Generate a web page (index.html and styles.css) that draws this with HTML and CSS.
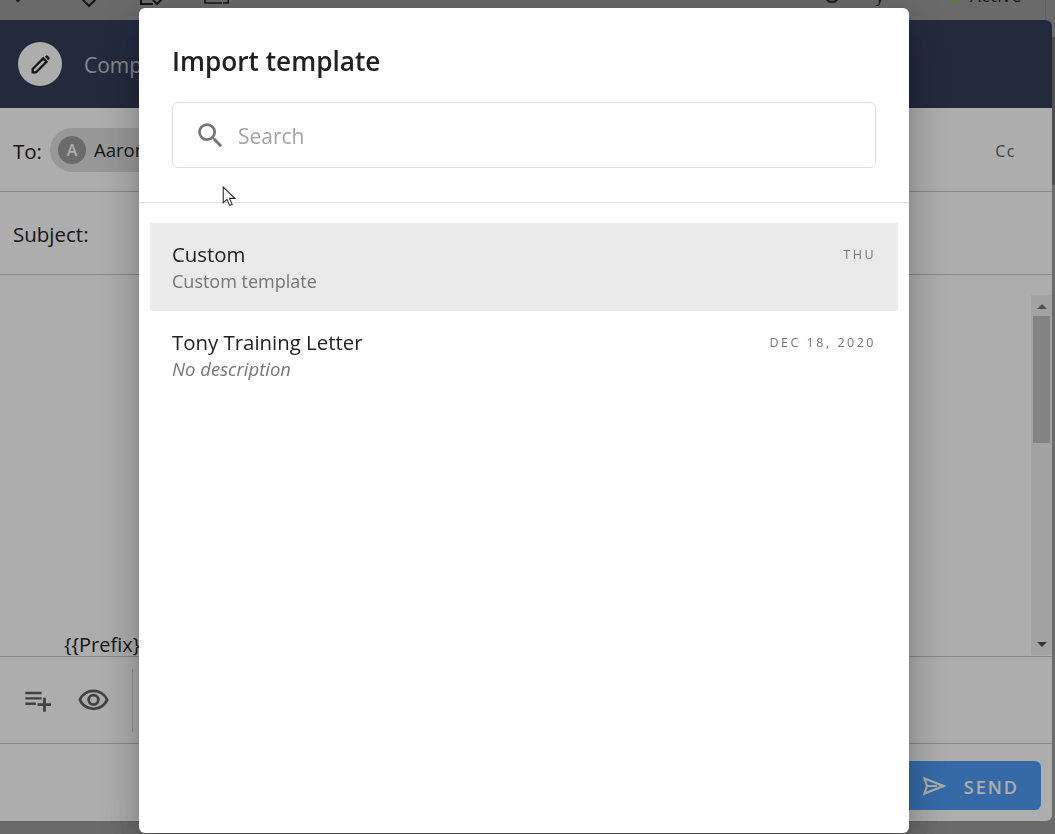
FILE: index.html
```html
<!DOCTYPE html>
<html lang="en">
<head>
<meta charset="utf-8">
<title>Import template</title>
<link rel="stylesheet" href="styles.css">
</head>
<body>
<div class="page">
  <div class="topbar">
    <div class="topbar-left">
      <svg class="top-icon top-first" viewBox="0 0 24 24"><path d="M9 13l3 3 3-3"/></svg>
      <svg class="top-icon" viewBox="0 0 24 24"><path d="M3 12l9 9 9-9"/></svg>
      <svg class="top-icon" viewBox="0 0 24 24"><path d="M0 3v16h12M12 15l4 4 7-7"/></svg>
      <svg class="top-icon" viewBox="0 0 28 24"><path d="M0 3v16h20M21 19h6V3"/></svg>
    </div>
    <div class="topbar-right">
      <span class="clock"></span><span class="top-text top-y">y</span>
      <span class="status-dot"></span><span class="top-text top-active">Active</span>
      <span class="top-rule"></span>
    </div>
  </div>
  <div class="compose">
    <header class="compose-head">
      <span class="head-avatar">
        <svg viewBox="0 0 24 24"><path class="pencil-body" d="M4.5 19.5v-3.2L14.6 6.2l3.2 3.2L7.7 19.5z"/><path d="M16.2 4.6l1.2-1.2a1 1 0 0 1 1.4 0l1.8 1.8a1 1 0 0 1 0 1.4l-1.2 1.2z"/></svg>
      </span>
      <span class="head-title">Compose</span>
    </header>
    <div class="field field-to">
      <span class="field-label">To:</span>
      <span class="chip"><span class="chip-avatar">A</span><span class="chip-name">Aaron Smith</span></span>
      <span class="cc">Cc</span>
    </div>
    <div class="field field-subject">
      <span class="field-label">Subject:</span>
    </div>
    <div class="editor">
      <div class="editor-text">{{Prefix}}</div>
      <div class="scrollbar">
        <span class="arrow-up"></span>
        <span class="thumb"></span>
        <span class="arrow-down"></span>
      </div>
    </div>
    <div class="tools">
      <svg class="tool tool-list" viewBox="0 0 24 24"><path d="M2 5h14v2H2zM2 9.6h14v2H2zM2 14.2h9v2H2zM17.2 10h2.4v4.8h4.4v2.4h-4.4V22h-2.4v-4.8h-4.7v-2.4h4.7z"/></svg>
      <svg class="tool tool-eye" viewBox="0 0 24 24"><path d="M12 6a9.77 9.77 0 0 1 8.82 5.5A9.77 9.77 0 0 1 12 17a9.77 9.77 0 0 1-8.82-5.5A9.77 9.77 0 0 1 12 6m0-2C7 4 2.73 7.11 1 11.5 2.73 15.89 7 19 12 19s9.27-3.11 11-7.5C21.27 7.11 17 4 12 4zm0 5a2.5 2.5 0 1 1 0 5 2.5 2.5 0 0 1 0-5m0-2a4.5 4.5 0 1 0 0 9 4.5 4.5 0 0 0 0-9z"/></svg>
      <span class="tool-sep"></span>
    </div>
    <footer class="compose-foot">
      <button class="send" type="button">
        <svg viewBox="0 0 24 24"><path d="M2.5 4.5L21.5 12 2.5 19.5 5 12zM5 12h10"/></svg>
        <span class="send-label">SEND</span>
      </button>
    </footer>
  </div>
</div>
<div class="page-scroll"></div>

<div class="backdrop"></div>

<section class="modal">
  <h1 class="modal-title">Import template</h1>
  <div class="search">
    <svg viewBox="0 0 24 24"><path d="M15.5 14h-.79l-.28-.27A6.47 6.47 0 0 0 16 9.5 6.5 6.5 0 1 0 9.5 16c1.61 0 3.09-.59 4.23-1.57l.27.28v.79l5 4.99L20.49 19l-4.99-5zm-6 0C7.01 14 5 11.99 5 9.5S7.01 5 9.5 5 14 7.01 14 9.5 11.99 14 9.5 14z"/></svg>
    <span class="search-placeholder">Search</span>
  </div>
  <div class="divider"></div>
  <ul class="list">
    <li class="item item-active">
      <div class="item-main">
        <div class="item-name">Custom</div>
        <div class="item-desc">Custom template</div>
      </div>
      <div class="item-date">THU</div>
    </li>
    <li class="item">
      <div class="item-main">
        <div class="item-name">Tony Training Letter</div>
        <div class="item-desc item-empty">No description</div>
      </div>
      <div class="item-date">DEC 18, 2020</div>
    </li>
  </ul>
</section>

<svg class="cursor" viewBox="0 0 13 20"><path d="M1 1v15l3.6-3.3 2.5 5.8 2.4-1-2.5-5.7H12z"/></svg>
</body>
</html>
```

FILE: styles.css
```css
* { box-sizing: border-box; }
html, body { margin: 0; height: 100%; }
body {
  overflow: hidden;
  background: #9c9c9c;
  font-family: "Open Sans", "Noto Sans", "Liberation Sans", sans-serif;
  color: #212121;
}
.page { width: 1055px; height: 834px; overflow: hidden; }

.topbar {
  height: 20px;
  display: flex;
  justify-content: space-between;
  overflow: hidden;
  padding: 0 9px 0 6px;
}
.topbar-left { display: flex; gap: 40px; margin-top: -15px; }
.top-icon { width: 24px; height: 24px; fill: none; stroke: #222; stroke-width: 2; overflow: visible; }
.top-first { margin-right: 7px; }
.topbar-right { display: flex; align-items: flex-start; height: 30px; margin-top: -16px; font-size: 17px; line-height: 23px; color: #222; }
.clock { width: 16px; height: 16px; border: 2px solid #222; border-radius: 50%; margin-top: 3px; }
.top-text { display: block; }
.top-y { margin-left: 35px; }
.status-dot { width: 12px; height: 12px; border-radius: 50%; background: #7cc142; margin: 6px 0 0 64px; }
.top-active { margin-left: 10px; min-width: 52px; letter-spacing: .8px; }
.top-rule { width: 1px; height: 40px; background: #8c8c8c; margin-left: 23px; }

.page-scroll { position: fixed; left: 1052px; top: 37px; width: 3px; height: 148px; background: #757575; }

.compose {
  width: 1052px;
  height: 801px;
  background: #fff;
  border-radius: 0 6px 6px 0;
  display: flex;
  flex-direction: column;
  overflow: hidden;
}
.compose-head {
  height: 88px;
  flex: none;
  background: #343e5c;
  display: flex;
  align-items: center;
  padding-left: 18px;
  gap: 22px;
}
.head-avatar {
  width: 44px; height: 44px; border-radius: 50%;
  background: #fff;
  display: flex; align-items: center; justify-content: center;
}
.head-avatar svg { width: 25px; height: 25px; fill: #212121; }
.head-avatar .pencil-body { fill: none; stroke: #212121; stroke-width: 2.2; }
.head-title { font-size: 21px; color: rgba(255,255,255,.72); padding-top: 2px; }

.field {
  flex: none;
  height: 84px;
  border-bottom: 1px solid #c8c8c8;
  display: flex;
  align-items: center;
  padding: 0 13px;
  font-size: 20.5px;
}
.field-subject { height: 83px; }
.field-label { margin-right: 8px; padding-top: 2px; }
.chip {
  display: flex; align-items: center;
  height: 44px; border-radius: 22px;
  background: #e0e0e0;
  padding: 0 16px 0 8px;
  gap: 8px;
  font-size: 18.5px;
}
.chip-avatar {
  width: 28px; height: 28px; border-radius: 50%;
  background: #9e9e9e; color: #fff;
  display: flex; align-items: center; justify-content: center;
  font-size: 16px; font-weight: 600;
}
.chip-name { white-space: nowrap; }
.cc { margin-left: auto; margin-right: 23px; padding-top: 3px; font-size: 16px; letter-spacing: 1.5px; color: #616161; }

.editor {
  flex: none;
  height: 382px;
  display: flex;
  align-items: flex-end;
  justify-content: space-between;
  padding: 0 0 0 64px;
  border-bottom: 1px solid #c8c8c8;
  overflow: hidden;
}
.editor-text { font-size: 20px; line-height: 24px; margin-bottom: -1px; }
.scrollbar {
  width: 21px;
  height: 360px;
  margin-bottom: 1px;
  background: #f1f1f1;
  display: flex;
  flex-direction: column;
  align-items: center;
}
.arrow-up, .arrow-down { width: 0; height: 0; border-left: 5px solid transparent; border-right: 5px solid transparent; }
.arrow-up { border-bottom: 5px solid #7a7a7a; margin: 9px 0 7px; }
.arrow-down { border-top: 5px solid #505050; margin: auto 0 8px; }
.thumb { width: 17px; height: 127px; background: #c1c1c1; }

.tools {
  flex: none;
  height: 87px;
  border-bottom: 1px solid #c8c8c8;
  display: flex;
  align-items: center;
  padding-left: 23px;
}
.tool { fill: #616161; flex: none; }
.tool-list { width: 28px; height: 28px; margin-right: 26px; }
.tool-eye { width: 33px; height: 33px; }
.tool-sep { width: 1px; height: 63px; background: #d4d4d4; margin-left: 22px; }

.compose-foot {
  flex: 1;
  display: flex;
  align-items: flex-start;
  justify-content: flex-end;
  padding: 17px 11px 0 0;
}
.send {
  width: 180px; height: 49px;
  border: 0; border-radius: 6px;
  background: #4f9df7;
  color: #fff;
  font: 600 18px "Open Sans", "Noto Sans", sans-serif;
  letter-spacing: 2px;
  display: flex; align-items: center; justify-content: flex-end;
  gap: 18px;
  padding: 0 22px 0 0;
}
.send svg { width: 24px; height: 24px; fill: none; stroke: #fff; stroke-width: 2.2; }
.send-label { padding-top: 3px; }

.backdrop { position: fixed; inset: 0; background: rgba(0,0,0,.32); }

.modal {
  position: fixed;
  left: 139px; top: 8px;
  width: 770px; height: 825px;
  background: #fff;
  border-radius: 6px;
  box-shadow: 0 11px 15px -7px rgba(0,0,0,.2), 0 24px 38px 3px rgba(0,0,0,.14), 0 9px 46px 8px rgba(0,0,0,.12);
  padding-top: 33px;
  display: flex;
  flex-direction: column;
}
.modal-title {
  margin: 0 33px;
  font-size: 26.2px;
  line-height: 40px;
  font-weight: 600;
  color: #212121;
}
.search {
  margin: 21px 33px 0;
  height: 66px;
  border: 1px solid #e0e0e0;
  border-radius: 6px;
  display: flex;
  align-items: center;
  padding-left: 21px;
  gap: 11px;
}
.search svg { width: 33px; height: 33px; fill: #757575; margin-top: 1px; }
.search-placeholder { font-size: 21px; color: #a3a3a3; padding-top: 1px; }
.divider { height: 1px; background: #e0e0e0; margin-top: 34px; }
.list { list-style: none; margin: 20px 11px 0; padding: 0; }
.item {
  height: 88px;
  display: flex;
  justify-content: space-between;
  padding: 16px 22px 0;
}
.item-active { background: #eaeaea; }
.item-name { font-size: 20.4px; line-height: 30px; color: #212121; }
.item-desc { font-size: 18px; line-height: 24px; color: #757575; }
.item-empty { font-style: italic; font-size: 18.5px; }
.item-date { font-size: 12.5px; line-height: 30px; letter-spacing: 2.5px; color: #757575; margin-top: 1px; }

.cursor { position: fixed; left: 222px; top: 186px; width: 14px; height: 21px; fill: #fff; stroke: #222; stroke-width: 1; }
```
